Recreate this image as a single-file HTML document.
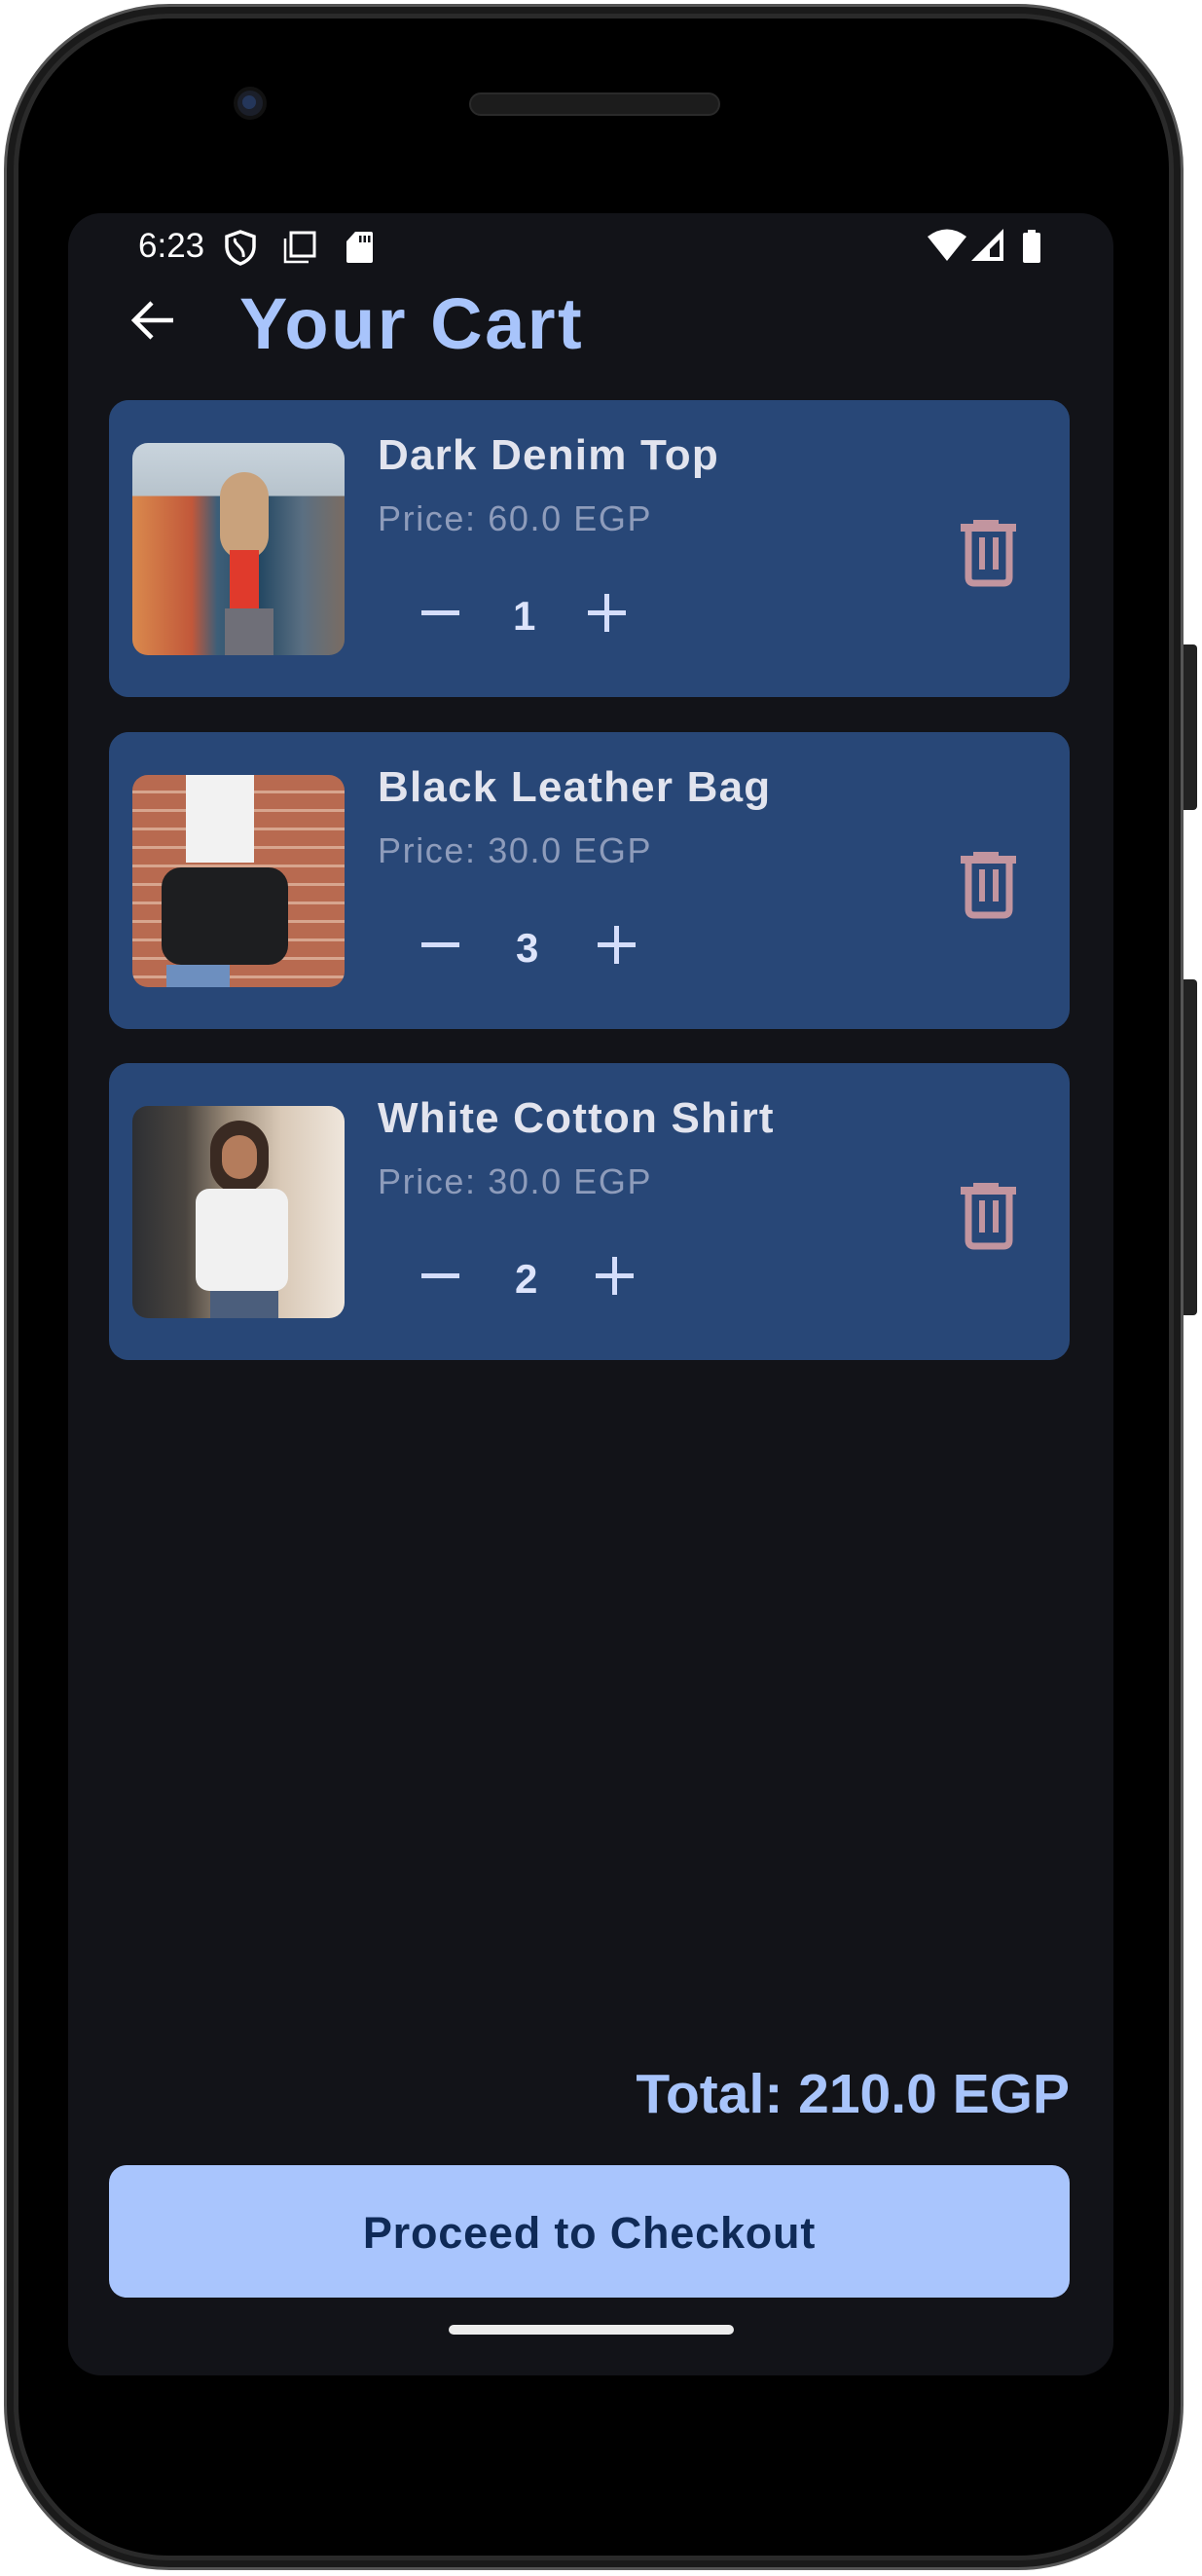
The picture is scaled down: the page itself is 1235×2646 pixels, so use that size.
<!DOCTYPE html>
<html><head><meta charset="utf-8"><style>
*{margin:0;padding:0;box-sizing:border-box}
body{width:1235px;height:2646px;background:#fff;position:relative;overflow:hidden;font-family:"Liberation Sans",sans-serif}
.abs{position:absolute}
.phone{left:4px;top:4px;width:1212px;height:2636px;border-radius:170px;background:#1a1a1a;border:3px solid #555}
.phone2{left:14px;top:14px;width:1192px;height:2616px;border-radius:160px;background:#000;border:5px solid #2a2a2a}
.screen{left:70px;top:219px;width:1074px;height:2221px;border-radius:34px;background:#121318}
.card{left:112px;width:987px;height:305px;border-radius:20px;background:#284777}
.img{left:24px;top:44px;width:218px;height:218px;border-radius:16px;overflow:hidden}
.name{left:276px;top:32px;font-weight:bold;font-size:44px;letter-spacing:1.2px;color:#e2e4ee}
.price{left:276px;top:101px;font-size:36px;letter-spacing:1.6px;color:#8e9cbb}
.qty{top:198px;font-weight:bold;font-size:42px;color:#dde4fb}
.minus{left:321px;top:216px;width:39px;height:5px;background:#d4ddfb}
.plus{width:39px;height:39px}
.plus:before{content:"";position:absolute;left:0;top:17px;width:39px;height:5px;background:#d4ddfb}
.plus:after{content:"";position:absolute;left:17px;top:0;width:5px;height:39px;background:#d4ddfb}
.trash{left:873px;top:120px}
</style></head><body>
<div class="abs" style="left:1210px;top:662px;width:20px;height:170px;background:#222;border-radius:4px"></div>
<div class="abs" style="left:1210px;top:1006px;width:20px;height:345px;background:#222;border-radius:4px"></div>
<div class="abs phone"></div>
<div class="abs phone2"></div>
<div class="abs" style="left:240px;top:89px;width:34px;height:34px;border-radius:50%;background:#1b1f2a;border:4px solid #111"></div>
<div class="abs" style="left:249px;top:98px;width:14px;height:14px;border-radius:50%;background:#24365a"></div>
<div class="abs" style="left:482px;top:95px;width:258px;height:24px;border-radius:12px;background:#1c1c1c;border:2px solid #2a2a2a"></div>
<div class="abs screen"></div>

<div class="abs" style="left:142px;top:233px;font-size:35px;color:#fff">6:23</div>
<svg class="abs" style="left:230px;top:236px" width="34" height="37" viewBox="0 0 34 37"><path d="M17 2 L31 7 V17 C31 26 25 32 17 35 C9 32 3 26 3 17 V7 Z" fill="none" stroke="#fff" stroke-width="3.5"/><path d="M12 9 C8 14 22 18 20 28" fill="none" stroke="#fff" stroke-width="3"/></svg>
<svg class="abs" style="left:290px;top:237px" width="36" height="34" viewBox="0 0 36 34"><rect x="9" y="2" width="24" height="24" fill="none" stroke="#fff" stroke-width="3"/><path d="M3 8 V32 H27" fill="none" stroke="#fff" stroke-width="2.5"/></svg>
<svg class="abs" style="left:355px;top:237px" width="29" height="34" viewBox="0 0 29 34"><path d="M10 1 H26 Q28 1 28 3 V31 Q28 33 26 33 H3 Q1 33 1 31 V11 Z" fill="#fff"/><rect x="14" y="5" width="2.5" height="7" fill="#121318"/><rect x="18.5" y="5" width="2.5" height="7" fill="#121318"/><rect x="23" y="5" width="2.5" height="7" fill="#121318"/></svg>
<svg class="abs" style="left:952px;top:234px" width="42" height="35" viewBox="0 0 42 35"><path d="M1 9 Q21 -6 41 9 L21 34 Z" fill="#fff"/></svg>
<svg class="abs" style="left:997px;top:234px" width="36" height="35" viewBox="0 0 36 35"><path d="M34 1 V34 H1 Z" fill="#fff"/><path d="M30 12 V30 H20 V22 Z" fill="#121318"/></svg>
<svg class="abs" style="left:1051px;top:236px" width="18" height="34" viewBox="0 0 18 34"><rect x="5" y="0" width="8" height="4" fill="#fff"/><rect x="0" y="3" width="18" height="31" rx="2" fill="#fff"/></svg>

<svg class="abs" style="left:132px;top:307px" width="50" height="44" viewBox="0 0 50 44"><path d="M46 22 H6 M24 4 L6 22 L24 40" fill="none" stroke="#fff" stroke-width="4.5"/></svg>
<div class="abs" style="left:246px;top:290px;font-size:74px;font-weight:bold;letter-spacing:2.5px;color:#a8c4fb">Your Cart</div>

<!-- card 1 -->
<div class="abs card" style="top:411px">
 <div class="abs img" style="background:linear-gradient(180deg,#c9d4dd 0%,#b7c3cc 25%,transparent 25%),linear-gradient(90deg,#d9894d 0%,#c2583a 28%,#3d5e78 40%,#244863 60%,#5a6f82 80%,#7a6c62 100%)">
  <div class="abs" style="left:90px;top:30px;width:50px;height:90px;border-radius:25px;background:#c9a27c"></div>
  <div class="abs" style="left:100px;top:110px;width:30px;height:60px;background:#e03a2c"></div>
  <div class="abs" style="left:95px;top:170px;width:50px;height:48px;background:#6f6f78"></div>
 </div>
 <div class="abs name">Dark Denim Top</div>
 <div class="abs price">Price: 60.0 EGP</div>
 <div class="abs minus"></div>
 <div class="abs qty" style="left:415px">1</div>
 <div class="abs plus" style="left:492px;top:199px"></div>
 <svg class="abs trash" width="62" height="72" viewBox="0 0 62 72"><rect x="15" y="3" width="26" height="6" fill="#c2959f"/><rect x="2" y="7" width="57" height="8" fill="#c2959f"/><path d="M10 15 V62 Q10 68 16 68 H46 Q52 68 52 62 V15" fill="none" stroke="#c2959f" stroke-width="7"/><rect x="21" y="21" width="6" height="33" fill="#c2959f"/><rect x="35" y="21" width="6" height="33" fill="#c2959f"/></svg>
</div>

<!-- card 2 -->
<div class="abs card" style="top:752px">
 <div class="abs img" style="background:repeating-linear-gradient(180deg,#b86a50 0 16px,#d7a58e 16px 19px),#b86a50">
  <div class="abs" style="left:55px;top:0;width:70px;height:90px;background:#f2f2f2"></div>
  <div class="abs" style="left:30px;top:95px;width:130px;height:100px;border-radius:20px;background:#1d1e20"></div>
  <div class="abs" style="left:35px;top:195px;width:65px;height:23px;background:#6d8fbf"></div>
 </div>
 <div class="abs name">Black Leather Bag</div>
 <div class="abs price">Price: 30.0 EGP</div>
 <div class="abs minus"></div>
 <div class="abs qty" style="left:418px">3</div>
 <div class="abs plus" style="left:502px;top:199px"></div>
 <svg class="abs trash" width="62" height="72" viewBox="0 0 62 72"><rect x="15" y="3" width="26" height="6" fill="#c2959f"/><rect x="2" y="7" width="57" height="8" fill="#c2959f"/><path d="M10 15 V62 Q10 68 16 68 H46 Q52 68 52 62 V15" fill="none" stroke="#c2959f" stroke-width="7"/><rect x="21" y="21" width="6" height="33" fill="#c2959f"/><rect x="35" y="21" width="6" height="33" fill="#c2959f"/></svg>
</div>

<!-- card 3 -->
<div class="abs card" style="top:1092px">
 <div class="abs img" style="background:linear-gradient(90deg,#2d2f33 0%,#4a4540 25%,#9a8a78 45%,#d9c9b7 70%,#efe6dc 100%)">
  <div class="abs" style="left:80px;top:15px;width:60px;height:75px;border-radius:30px;background:#3a2a22"></div>
  <div class="abs" style="left:92px;top:30px;width:36px;height:45px;border-radius:18px;background:#b47c5c"></div>
  <div class="abs" style="left:65px;top:85px;width:95px;height:105px;border-radius:14px;background:#f1f1f1"></div>
  <div class="abs" style="left:80px;top:190px;width:70px;height:28px;background:#4b5e7c"></div>
 </div>
 <div class="abs name">White Cotton Shirt</div>
 <div class="abs price">Price: 30.0 EGP</div>
 <div class="abs minus"></div>
 <div class="abs qty" style="left:417px">2</div>
 <div class="abs plus" style="left:500px;top:199px"></div>
 <svg class="abs trash" width="62" height="72" viewBox="0 0 62 72"><rect x="15" y="3" width="26" height="6" fill="#c2959f"/><rect x="2" y="7" width="57" height="8" fill="#c2959f"/><path d="M10 15 V62 Q10 68 16 68 H46 Q52 68 52 62 V15" fill="none" stroke="#c2959f" stroke-width="7"/><rect x="21" y="21" width="6" height="33" fill="#c2959f"/><rect x="35" y="21" width="6" height="33" fill="#c2959f"/></svg>
</div>

<div class="abs" style="right:136px;top:2118px;font-size:57px;font-weight:bold;color:#a8c4fb;white-space:nowrap">Total: 210.0 EGP</div>
<div class="abs" style="left:112px;top:2224px;width:987px;height:136px;border-radius:18px;background:#a9c5fd;color:#0f2a57;font-weight:bold;font-size:45px;text-align:center;line-height:140px;letter-spacing:0.8px">Proceed to Checkout</div>
<div class="abs" style="left:461px;top:2388px;width:293px;height:10px;border-radius:5px;background:#ececec"></div>
</body></html>
